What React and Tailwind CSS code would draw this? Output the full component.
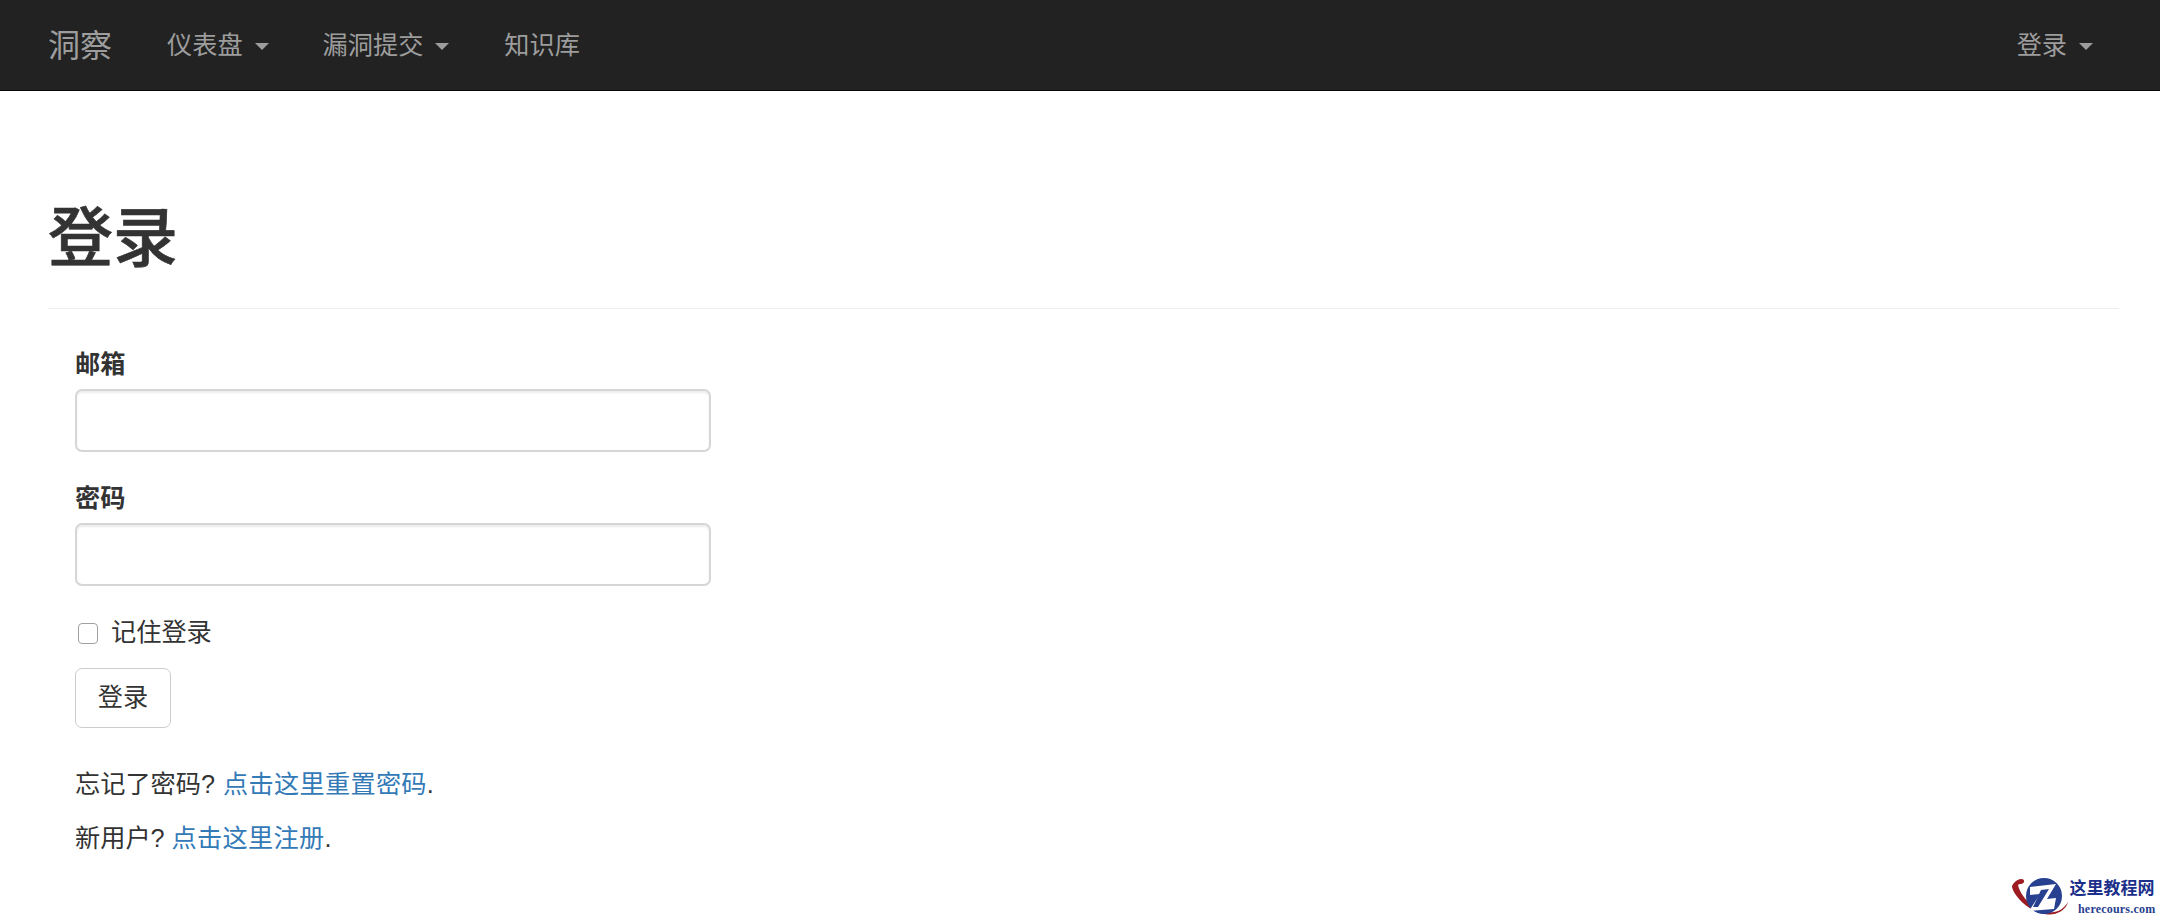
const fontStack = 'font-["Liberation_Sans","Noto_Sans_CJK_SC",sans-serif]';

function Caret({ className = '' }) {
  return (
    <span className={`inline-block w-0 h-0 border-x-[7px] border-x-transparent border-t-[7px] border-t-[#9d9d9d] ${className}`} />
  );
}

function NavLink({ label, caret, className = '' }) {
  return (
    <a href="#" className={`flex items-center text-[25.2px] text-[#9d9d9d] ${className}`}>
      {label}
      {caret && <Caret className="ml-3 mt-[2px]" />}
    </a>
  );
}

function Field({ label, type, className = '' }) {
  return (
    <div className={className}>
      <label className="block text-[25.2px] leading-[36px] font-bold text-[#333] mb-[7px]">{label}</label>
      <input
        type={type}
        className="block w-[636px] h-[63px] bg-white border-2 border-[#d6d6d6] rounded-[7px] shadow-[inset_0_2px_2px_rgba(0,0,0,0.075)]"
      />
    </div>
  );
}

function Watermark() {
  return (
    <div className="absolute right-[5px] bottom-[4px] flex items-start">
      <svg width="58" height="38" viewBox="0 0 58 38">
        <path d="M3 6 C7 1 14 1 13 5 C11 8 9 6 7 8 C9 18 21 33 38 35 C46 36 52 33 57 25 C55 33 46 38 37 37.500 C18 36 3 19 1 10 C1 8 2 7 3 6 Z" fill="#9c1c22" />
        <circle cx="33" cy="19" r="18" fill="#27408f" />
        <path d="M19 10 L45 7 L36 22 L45 21 L43 32 L18 34 L29 17 L19 18 Z" fill="#fff" />
        <path d="M30 13 L38 12 L27 30 L22 30 Z" fill="#27408f" />
      </svg>
      <div className="w-[86px] text-center">
        <div className="mt-[2px] text-[17px] leading-[20px] font-bold text-[#1c2f8a] whitespace-nowrap">这里教程网</div>
        <div className='mt-[3px] pl-[9px] font-["Liberation_Serif",serif] text-[12px] leading-[14px] font-bold tracking-[0.2px] text-[#27408f] whitespace-nowrap'>herecours.com</div>
      </div>
    </div>
  );
}

export default function App() {
  return (
    <div className={`relative w-[2160px] h-[920px] overflow-hidden bg-white text-[#333] ${fontStack}`}>
      <nav className="flex items-center justify-between h-[91px] pt-[2px] pl-[48px] pr-[67px] bg-[#222] border-b border-[#080808]">
        <div className="flex items-center">
          <a href="#" className="text-[32px] text-[#9d9d9d] mr-[55px]">洞察</a>
          <NavLink label="仪表盘" caret className="mr-[54px]" />
          <NavLink label="漏洞提交" caret className="mr-[55px]" />
          <NavLink label="知识库" />
        </div>
        <NavLink label="登录" caret />
      </nav>

      <main className="pl-[48px] pr-[41px]">
        <div className="pt-[102px] pb-[23px] border-b border-[#eee]">
          <h1 className="text-[65px] leading-[92px] font-medium text-[#333] [-webkit-text-stroke:0.6px_#333]">登录</h1>
        </div>

        <form className="pl-[27px] pt-[37px]">
          <Field label="邮箱" type="email" />
          <Field label="密码" type="password" className="mt-[28px]" />

          <label className="flex items-center mt-[31px] h-[32px] text-[25.2px] text-[#333]">
            <input type="checkbox" className="appearance-none ml-[3px] w-[20px] h-[21px] bg-white border border-[#a0a0a0] rounded-[4px]" />
            <span className="ml-[13px]">记住登录</span>
          </label>

          <button type="button" className="block mt-[19px] w-[96px] h-[60px] bg-white border border-[#ccc] rounded-[7px] text-[25.2px] text-[#333]">
            登录
          </button>

          <p className="mt-[38px] text-[25.2px] leading-[36px]">
            忘记了密码? <a href="#" className="ml-[1px] text-[#337ab7] tracking-[0.3px]">点击这里重置密码</a>.
          </p>
          <p className="mt-[18px] text-[25.2px] leading-[36px]">
            新用户? <a href="#" className="text-[#337ab7] tracking-[0.3px]">点击这里注册</a>.
          </p>
        </form>
      </main>

      <Watermark />
    </div>
  );
}
